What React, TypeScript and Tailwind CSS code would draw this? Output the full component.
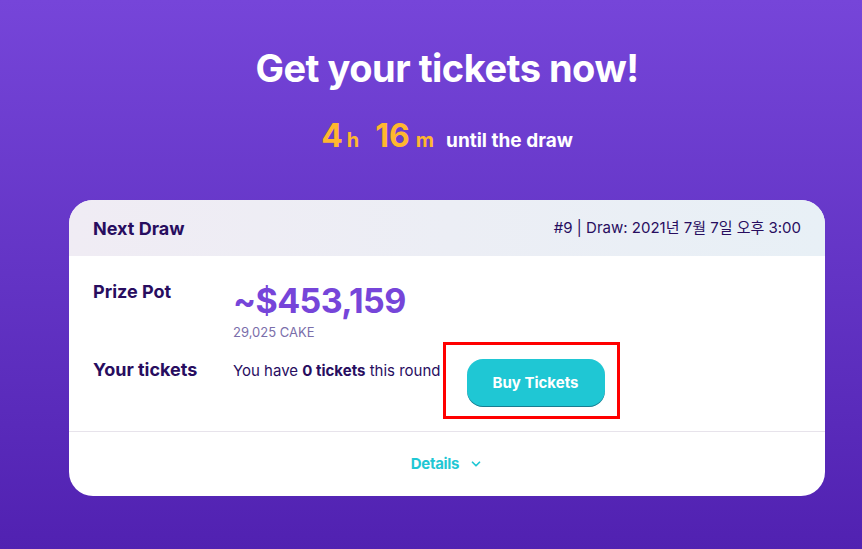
import React from "react";

export default function App() {
  const font = { fontFamily: "Inter, 'Noto Sans CJK KR', sans-serif" };
  return (
    <div
      className="w-[862px] h-[549px] overflow-hidden bg-gradient-to-b from-[#7645D9] to-[#5121B1] flex flex-col items-center pl-[32px]"
      style={font}
    >
      <h1 className="mt-[44px] text-[38px] leading-[48px] font-bold text-white tracking-[-0.5px]">
        Get your tickets now!
      </h1>
      <div className="mt-[24px] flex items-baseline text-[#FFB72E] font-bold">
        <span className="text-[32px] leading-[40px]">4</span>
        <span className="text-[20px] ml-[4px]">h</span>
        <span className="text-[32px] leading-[40px] ml-[16px]">16</span>
        <span className="text-[20px] ml-[6px]">m</span>
        <span className="text-[19px] text-white ml-[12px]">until the draw</span>
      </div>
      <div className="mt-[44px] w-[756px] rounded-[24px] bg-white overflow-hidden">
        <div className="h-[56px] px-6 flex items-center justify-between bg-gradient-to-r from-[#F0ECF4] to-[#E8F0F6]">
          <span className="text-[18px] font-bold text-[#280D5F]">Next Draw</span>
          <span className="text-[15px] text-[#280D5F]">#9 | Draw: 2021년 7월 7일 오후 3:00</span>
        </div>
        <div className="px-6 pt-6 pb-6">
          <div className="flex items-start">
            <div className="w-[140px] text-[18px] leading-6 font-bold text-[#280D5F]">Prize Pot</div>
            <div className="flex flex-col">
              <span className="text-[34px] leading-[42px] font-bold text-[#7645D9] tracking-[-0.6px]">~$453,159</span>
              <span className="text-[13px] leading-5 text-[#7A6EAA]">29,025 CAKE</span>
            </div>
          </div>
          <div className="mt-4 flex items-start">
            <div className="w-[140px] text-[18px] leading-6 font-bold text-[#280D5F]">Your tickets</div>
            <div className="flex items-start">
              <span className="mt-[1px] text-[15px] leading-6 text-[#280D5F]">
                You have <b>0 tickets</b> this round
              </span>
              <div className="relative ml-[26px] mt-[1px]">
                <button className="h-[48px] w-[138px] rounded-[16px] bg-[#1FC7D4] text-white font-bold text-[15px] shadow-[inset_0_-1px_0_0_rgba(14,14,44,0.4)]">
                  Buy Tickets
                </button>
                <div className="absolute left-[-24px] top-[-17px] w-[177px] h-[77px] border-[3px] border-[#FF0000] pointer-events-none" />
              </div>
            </div>
          </div>
        </div>
        <div className="border-t border-[#E7E3EB] h-[65px] flex items-center justify-center gap-[10px]">
          <span className="text-[15px] font-bold text-[#1FC7D4] tracking-[-0.3px]">Details</span>
          <svg width="14" height="14" viewBox="0 0 24 24" fill="none" stroke="#1FC7D4" strokeWidth="3" strokeLinecap="round" strokeLinejoin="round">
            <path d="M6 9l6 6 6-6" />
          </svg>
        </div>
      </div>
    </div>
  );
}
